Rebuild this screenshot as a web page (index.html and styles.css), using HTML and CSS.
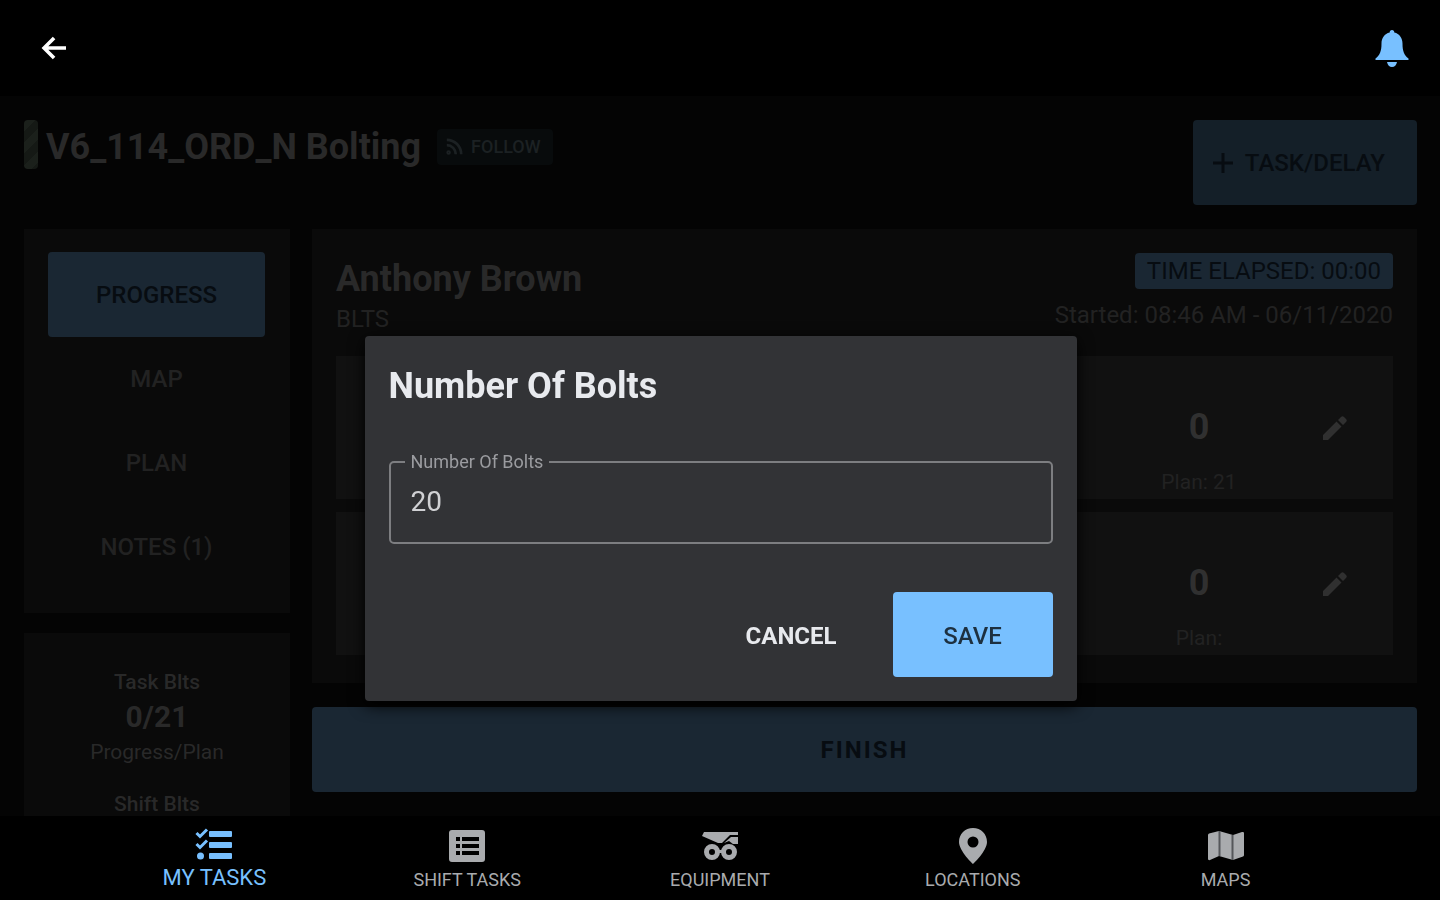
FILE: index.html
```html
<!DOCTYPE html>
<html lang="en">
<head>
<meta charset="UTF-8">
<meta name="viewport" content="width=device-width, initial-scale=1.0">
<title>V6_114_ORD_N Bolting</title>
<link rel="stylesheet" href="styles.css">
</head>
<body>
<header class="topbar">
    <button class="icon-button" aria-label="Back">
        <svg width="36" height="36" viewBox="0 0 24 24"><path d="M20 10.900H8.200l4.700-4.700L11.200 4.500 3.700 12l7.500 7.500 1.700-1.700-4.700-4.700H20z"/></svg>
    </button>
    <button class="icon-button bell" aria-label="Notifications">
        <svg width="36" height="40" viewBox="0 0 36 40"><path d="M18 2c-1.500 0-2.300 1-2.300 2.500C10.500 5.700 7.500 10 7.500 15.500 7.500 23 6 27 1.500 30.500V32h33v-1.500C30 27 28.500 23 28.500 15.500c0-5.500-3-9.800-8.200-11C20.300 3 19.500 2 18 2zM13 34c.5 3 2.500 5 5 5s4.500-2 5-5z"/></svg>
    </button>
</header>

<main class="page">
    <div class="title-row">
        <span class="stripe"></span>
        <h1>V6_114_ORD_N Bolting</h1>
        <button class="follow">
            <svg width="18" height="18" viewBox="0 0 20 20" fill="none" stroke="currentColor" stroke-width="3"><circle cx="4" cy="16" r="1" /><path d="M2 8a10 10 0 0 1 10 10M2 2a16 16 0 0 1 16 16"/></svg>
            FOLLOW
        </button>
        <button class="btn add-task">
            <svg width="20" height="20" viewBox="0 0 20 20" fill="none" stroke="currentColor" stroke-width="3"><path d="M10 0v20M0 10h20"/></svg>
            TASK/DELAY
        </button>
    </div>

    <div class="columns">
        <aside class="sidebar">
            <div class="panel tabs">
                <button class="btn">PROGRESS</button>
                <button class="tab">MAP</button>
                <button class="tab">PLAN</button>
                <button class="tab">NOTES (1)</button>
            </div>
            <div class="panel stats">
                <h3>Task Blts</h3>
                <strong>0/21</strong>
                <p>Progress/Plan</p>
                <h3>Shift Blts</h3>
            </div>
        </aside>

        <section class="work">
            <div class="panel operator">
                <div class="operator-head">
                    <div>
                        <h2>Anthony Brown</h2>
                        <p>BLTS</p>
                    </div>
                    <div class="times">
                        <span class="elapsed">TIME ELAPSED: 00:00</span>
                        <p>Started: 08:46 AM - 06/11/2020</p>
                    </div>
                </div>
                <div class="entry">
                    <div class="entry-value"><strong>0</strong><span>Plan: 21</span></div>
                    <button class="edit" aria-label="Edit">
                        <svg width="26" height="26" viewBox="0 0 26 26"><path d="M1 20v5h5L19.500 11.500l-5-5zM16 5l5 5 3-3c1-1 1-2 0-3l-2-2c-1-1-2-1-3 0z"/></svg>
                    </button>
                </div>
                <div class="entry">
                    <div class="entry-value"><strong>0</strong><span>Plan:</span></div>
                    <button class="edit" aria-label="Edit">
                        <svg width="26" height="26" viewBox="0 0 26 26"><path d="M1 20v5h5L19.500 11.500l-5-5zM16 5l5 5 3-3c1-1 1-2 0-3l-2-2c-1-1-2-1-3 0z"/></svg>
                    </button>
                </div>
            </div>
            <button class="btn finish">FINISH</button>
        </section>
    </div>
</main>

<nav class="bottom-nav">
    <a href="#" class="active">
        <svg width="38" height="36" viewBox="0 0 38 36"><rect x="14" y="3" width="23" height="6" rx="1"/><rect x="14" y="14" width="23" height="6" rx="1"/><rect x="14" y="25" width="23" height="6" rx="1"/><circle cx="5.500" cy="28" r="3.500"/><path d="M1.500 5l3.500 3.500L12 1.500M1.500 16l3.500 3.500 7-7" fill="none" stroke="currentColor" stroke-width="3"/></svg>
        MY TASKS
    </a>
    <a href="#">
        <svg width="38" height="36" viewBox="0 0 38 36"><path fill-rule="evenodd" d="M4 2h30q3 0 3 3v26q0 3-3 3H4q-3 0-3-3V5q0-3 3-3zm4 7v4h4V9zm6 0v4h17V9zm-6 7v4h4v-4zm6 0v4h17v-4zm-6 7v4h4v-4zm6 0v4h17v-4z"/></svg>
        SHIFT TASKS
    </a>
    <a href="#">
        <svg width="38" height="36" viewBox="0 0 38 36"><path d="M3 4h34v3h-8l-8 8h-4L1 8zM30 9h7v7h-5l-4-3-5 2z"/><g fill="none" stroke="currentColor" stroke-width="5"><circle cx="11" cy="24" r="5.500"/><circle cx="28" cy="24" r="5.500"/></g><path d="M16 22h7v3h-7z"/></svg>
        EQUIPMENT
    </a>
    <a href="#">
        <svg width="38" height="36" viewBox="0 0 38 36"><path fill-rule="evenodd" d="M19 0C11 0 5 6 5 14c0 9 14 22 14 22s14-13 14-22c0-8-6-14-14-14zm0 8.500a5.500 5.500 0 1 1 0 11 5.500 5.500 0 0 1 0-11z"/></svg>
        LOCATIONS
    </a>
    <a href="#">
        <svg width="38" height="36" viewBox="0 0 38 36"><path d="M1 7q0-1 1-1.500L12 3l14 4 9-3q2-.5 2 1v22q0 1-1 1.500L26 32l-14-4-9 4q-2 .5-2-1z"/><path d="M12.500 3v25M25.500 7v25" stroke="#55575a" stroke-width="2"/></svg>
        MAPS
    </a>
</nav>

<div class="overlay">
    <form class="dialog" role="dialog" aria-labelledby="dialog-title">
        <h2 id="dialog-title">Number Of Bolts</h2>
        <fieldset class="field">
            <legend><label for="bolts">Number Of Bolts</label></legend>
            <input type="text" id="bolts" value="20">
        </fieldset>
        <div class="actions">
            <button type="button" class="cancel">CANCEL</button>
            <button type="button" class="save">SAVE</button>
        </div>
    </form>
</div>
</body>
</html>
```
FILE: styles.css
```css
* {
    box-sizing: border-box;
}
body {
    margin: 0;
    height: 100vh;
    display: flex;
    flex-direction: column;
    overflow: hidden;
    background-color: #000;
    color: #292929;
    font-family: Roboto, sans-serif;
    font-size: 24px;
    line-height: 28px;
}
h1, h2, h3, p {
    margin: 0;
}
button {
    border: none;
    padding: 0;
    background: none;
    color: inherit;
    font: inherit;
    cursor: pointer;
}
svg {
    fill: currentColor;
    flex: none;
}
svg[fill="none"] {
    fill: none;
}

/* Top bar */
.topbar {
    height: 96px;
    flex: none;
    padding: 0 30px 0 36px;
    display: flex;
    align-items: center;
    justify-content: space-between;
    color: #fff;
}
.icon-button {
    display: flex;
}
.bell {
    color: #78c0ff;
}

/* Page */
.page {
    flex: 1;
    min-height: 0;
    padding: 24px 23px 0 24px;
    display: flex;
    flex-direction: column;
    gap: 24px;
    overflow: hidden;
    background-color: #040404;
}
.title-row {
    flex: none;
    display: flex;
    align-items: flex-start;
}
.stripe {
    width: 14px;
    height: 49px;
    margin-right: 8px;
    border-radius: 4px;
    background: repeating-linear-gradient(135deg, #1b201b 0 8px, #151915 8px 16px);
}
h1 {
    font-size: 36px;
    line-height: 54px;
}
.follow {
    height: 36px;
    margin: 9px 0 0 16px;
    padding: 0 12px 0 8px;
    display: flex;
    align-items: center;
    gap: 8px;
    border-radius: 4px;
    background-color: #080b0c;
    color: #1c2123;
    font-size: 18px;
    font-weight: 500;
}
.btn {
    height: 85px;
    display: flex;
    align-items: center;
    justify-content: center;
    border-radius: 4px;
    background-color: #1a2733;
    color: #070c11;
    font-weight: 500;
}
.add-task {
    margin-left: auto;
    padding: 0 32px 0 20px;
    gap: 12px;
    background-color: #141f28;
}
.columns {
    flex: 1;
    min-height: 0;
    display: flex;
    gap: 22px;
}
.panel {
    padding: 24px;
    background-color: #0a0a0a;
}
.sidebar {
    width: 266px;
    flex: none;
    display: flex;
    flex-direction: column;
    gap: 20px;
}
.tabs {
    flex: none;
    padding: 23px 25px 24px 24px;
    display: flex;
    flex-direction: column;
}
.tab {
    height: 84px;
    font-weight: 500;
    color: #222;
}
.stats {
    flex: 1;
    padding-top: 33px;
    text-align: center;
    font-size: 21px;
}
.stats h3 {
    font-size: 21px;
    font-weight: 500;
    line-height: 32px;
}
.stats strong {
    display: block;
    font-size: 30px;
    line-height: 38px;
}
.stats p {
    margin-bottom: 20px;
    line-height: 32px;
}
.work {
    flex: 1;
    display: flex;
    flex-direction: column;
    gap: 24px;
}
.operator {
    padding-bottom: 28px;
    display: flex;
    flex-direction: column;
    gap: 13px;
}
.operator-head {
    height: 90px;
    display: flex;
    justify-content: space-between;
}
.operator-head h2 {
    font-size: 36px;
    line-height: 52px;
}
.operator-head p {
    color: #222;
}
.times {
    display: flex;
    flex-direction: column;
    align-items: flex-end;
    gap: 12px;
}
.elapsed {
    padding: 4px 12px;
    border-radius: 4px;
    background-color: #1a2733;
    color: #070c11;
}
.entry {
    height: 143px;
    padding-right: 16px;
    display: flex;
    justify-content: flex-end;
    background-color: #111;
}
.entry-value {
    width: 188px;
    padding: 47px 0 3px;
    display: flex;
    flex-direction: column;
    justify-content: space-between;
    align-items: center;
    font-size: 21px;
    color: #222;
}
.entry-value strong {
    font-size: 36px;
    line-height: 48px;
    color: #303030;
}
.edit {
    width: 84px;
    display: flex;
    align-items: center;
    justify-content: center;
    color: #303030;
}
.finish {
    font-weight: bold;
    letter-spacing: 2px;
}

/* Bottom navigation */
.bottom-nav {
    height: 84px;
    flex: none;
    padding: 12px 88px 0;
    display: flex;
}
.bottom-nav a {
    flex: 1;
    display: flex;
    flex-direction: column;
    align-items: center;
    color: #a9abae;
    font-size: 18px;
    line-height: 31px;
    text-decoration: none;
}
.bottom-nav .active {
    color: #78c0ff;
    font-size: 22px;
    line-height: 28px;
}

/* Dialog */
.overlay {
    position: fixed;
    inset: 0;
    padding: 136px 0 0 1px;
    display: flex;
    align-items: center;
    justify-content: center;
}
.dialog {
    width: 712px;
    padding: 24px;
    border-radius: 4px;
    background-color: #323336;
    color: #e8eaee;
    box-shadow: 0 4px 16px #000;
}
.dialog h2 {
    font-size: 36px;
    line-height: 52px;
}
.field {
    height: 92px;
    margin: 40px 0 48px;
    padding: 0 20px;
    border: 2px solid #7d7e81;
    border-radius: 5px;
}
.field legend {
    margin-left: -6px;
    padding: 0 6px;
    color: #9b9ca0;
    font-size: 18px;
    line-height: 20px;
}
.field input {
    width: 100%;
    height: 60px;
    padding: 0;
    border: none;
    outline: none;
    background: none;
    color: #d0d1d4;
    font: inherit;
    font-size: 28px;
}
.actions {
    display: flex;
    justify-content: flex-end;
    gap: 12px;
    font-weight: 500;
}
.actions button {
    padding-top: 3px;
}
.actions .cancel {
    padding: 3px 44px 0;
    font-weight: bold;
}
.save {
    width: 160px;
    height: 85px;
    border-radius: 4px;
    background-color: #78c0ff;
    color: #1d3040;
}
```
